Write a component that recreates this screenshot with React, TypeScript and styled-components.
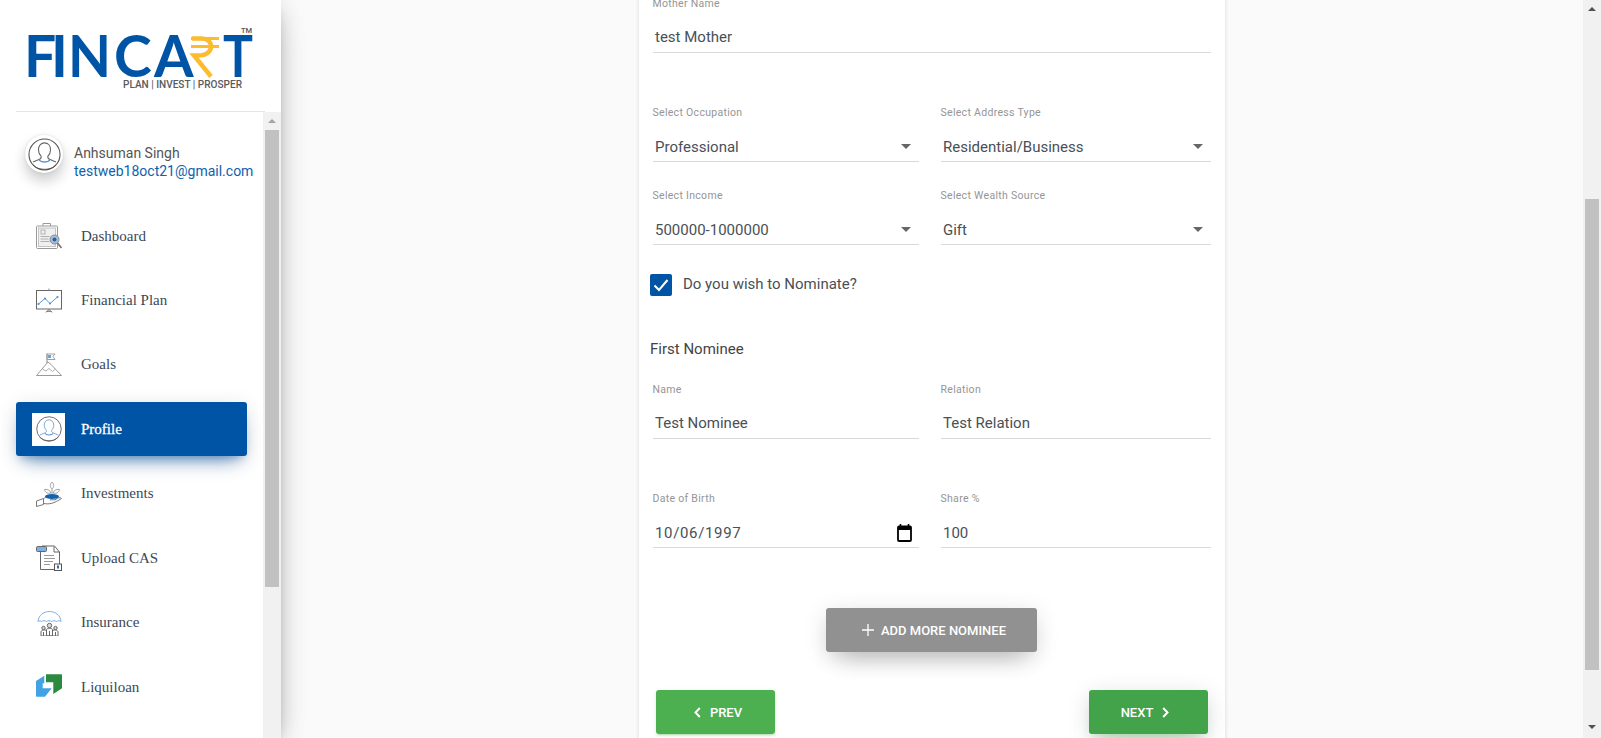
import { FC, ReactNode } from "react";
import styled, { createGlobalStyle } from "styled-components";

const GlobalStyle = createGlobalStyle`
  html, body {
    margin: 0;
    height: 738px;
    overflow: hidden;
    background: #fafafa;
    font-family: Roboto, "Liberation Sans", sans-serif;
  }
  * { box-sizing: border-box; }
`;

const Page = styled.div`
  display: flex;
  height: 738px;
  width: 1601px;
  overflow: hidden;
`;

/* sidebar */
const Sidebar = styled.aside`
  position: relative;
  z-index: 2;
  flex: none;
  width: 281px;
  height: 738px;
  display: flex;
  flex-direction: column;
  background: #fff;
  box-shadow:
    0 10px 30px -12px rgba(0, 0, 0, 0.42),
    0 4px 25px 0 rgba(0, 0, 0, 0.12),
    0 8px 10px -5px rgba(0, 0, 0, 0.2);
`;

const LogoBlock = styled.div`
  flex: none;
  height: 112px;
  margin: 0 16px;
  border-bottom: 1px solid #e4e4e4;
  padding: 0 0 0 12px;
`;

const SidebarBody = styled.div`
  flex: 1;
  display: flex;
  min-height: 0;
`;

const SidebarContent = styled.div`
  flex: 1;
  min-width: 0;
  overflow: hidden;
`;

const UserBlock = styled.div`
  height: 97px;
  padding: 23px 0 0 25px;
  display: flex;
  gap: 11px;
`;

const Avatar = styled.div`
  flex: none;
  width: 38px;
  height: 38px;
  border-radius: 50%;
  background: #fff;
  box-shadow: 0 8px 14px rgba(0, 0, 0, 0.2), 0 0 3px rgba(0, 0, 0, 0.12);
  display: flex;
  align-items: center;
  justify-content: center;
`;

const UserText = styled.div`
  padding-top: 9px;
  font-size: 14px;
  line-height: 18px;
  white-space: nowrap;
`;

const UserName = styled.div`
  color: #555;
`;

const UserEmail = styled.div`
  color: #0f62ac;
`;

const NavList = styled.nav`
  display: flex;
  flex-direction: column;
  gap: 10.45px;
  padding-left: 16px;
`;

const NavItem = styled.a<{ $active?: boolean }>`
  width: 231px;
  height: 54px;
  display: flex;
  align-items: center;
  gap: 16px;
  padding-left: 16px;
  border-radius: 3px;
  font: 400 15px "Liberation Serif", "Times New Roman", serif;
  color: ${(p) => (p.$active ? "#fff" : "#3c4858")};
  -webkit-text-stroke: ${(p) => (p.$active ? "0.3px #fff" : "0")};
  background: ${(p) => (p.$active ? "#0054a6" : "transparent")};
  box-shadow: ${(p) =>
    p.$active
      ? "0 12px 20px -10px rgba(0, 84, 166, 0.6), 0 4px 20px 0 rgba(0, 0, 0, 0.12), 0 7px 8px -5px rgba(0, 84, 166, 0.3)"
      : "none"};
`;

const NavIconBox = styled.span<{ $active?: boolean }>`
  flex: none;
  width: 33px;
  height: 33px;
  display: flex;
  align-items: center;
  justify-content: center;
  background: ${(p) => (p.$active ? "#fff" : "transparent")};
`;

/* scrollbars */
const ScrollTrack = styled.div`
  flex: none;
  width: 18px;
  height: 100%;
  display: flex;
  flex-direction: column;
  background: #f1f1f1;
`;

const ScrollArrow = styled.div<{ $down?: boolean; $dim?: boolean }>`
  flex: none;
  height: 18px;
  display: flex;
  align-items: center;
  justify-content: center;
  margin-top: ${(p) => (p.$down ? "auto" : "0")};
  margin-bottom: ${(p) => (p.$down ? "2px" : "0")};

  &::after {
    content: "";
    border-left: 4.5px solid transparent;
    border-right: 4.5px solid transparent;
    ${(p) => (p.$down ? "border-top" : "border-bottom")}: 4px solid
      ${(p) => (p.$dim ? "#a3a3a3" : "#505050")};
  }
`;

const ScrollThumb = styled.div<{ $top: number; $height: number }>`
  flex: none;
  width: 14px;
  margin: ${(p) => p.$top}px 2px 0;
  height: ${(p) => p.$height}px;
  background: #c1c1c1;
`;

/* main */
const Main = styled.main`
  flex: 1;
  min-width: 0;
  display: flex;
  justify-content: center;
  overflow: hidden;
`;

const Card = styled.section`
  flex: none;
  width: 586px;
  height: 760px;
  margin-top: -3px;
  padding: 0 14px;
  background: #fff;
  box-shadow: 0 1px 4px 0 rgba(0, 0, 0, 0.14);
`;

const Row = styled.div<{ $mt?: number }>`
  display: grid;
  grid-template-columns: 265.5px 270px;
  column-gap: 22.5px;
  margin-top: ${(p) => p.$mt ?? 0}px;
`;

const FullField = styled.div`
  grid-column: 1 / 3;
`;

const FieldLabel = styled.div`
  height: 14px;
  margin-left: -0.5px;
  font-size: 10.5px;
  line-height: 14px;
  color: #959595;
  letter-spacing: 0.3px;
  white-space: nowrap;
`;

const FieldControl = styled.div<{ $raised?: boolean }>`
  margin-top: 14px;
  height: 28px;
  padding: 0 8px ${(p) => (p.$raised ? 4 : 2)}px 2px;
  display: flex;
  align-items: center;
  justify-content: space-between;
  border-bottom: 1px solid #d8d8d8;
  font-size: 15px;
  color: #495057;
`;

const DateText = styled.span`
  letter-spacing: 0.65px;
`;

const Caret = styled.span`
  flex: none;
  margin-top: -1px;
  border-left: 5px solid transparent;
  border-right: 5px solid transparent;
  border-top: 5px solid #666;
`;

const CheckRow = styled.label`
  display: flex;
  align-items: center;
  gap: 11px;
  margin: 29px 0 0 -3px;
  height: 22px;
  font-size: 15px;
  color: #495057;
`;

const CheckText = styled.span`
  margin-top: -3px;
`;

const CheckBox = styled.span`
  flex: none;
  width: 22px;
  height: 22px;
  border-radius: 2px;
  background: #0054a6;
  display: flex;
  align-items: center;
  justify-content: center;
`;

const SectionTitle = styled.div`
  margin: 43px 0 0 -3px;
  height: 20px;
  font-size: 15px;
  line-height: 20px;
  color: #444;
`;

const Centered = styled.div`
  display: flex;
  justify-content: center;
  margin-top: 60px;
  padding-right: 1px;
`;

const Button = styled.button<{
  $tone: "gray" | "green" | "greenHover";
  $wide?: boolean;
  $padLeft?: number;
  $padRight?: number;
}>`
  width: ${(p) => (p.$wide ? 211 : 119)}px;
  height: 44px;
  border: 0;
  border-radius: 3px;
  padding: 0 ${(p) => p.$padRight ?? 0}px 0 ${(p) => p.$padLeft ?? 0}px;
  display: flex;
  align-items: center;
  justify-content: center;
  gap: ${(p) => (p.$wide ? 7 : 9)}px;
  font: 500 13px Roboto, sans-serif;
  text-transform: uppercase;
  color: #fff;
  background: ${(p) =>
    p.$tone === "gray" ? "#919191" : p.$tone === "green" ? "#4caf50" : "#43a34a"};
  box-shadow: ${(p) =>
    p.$tone === "gray"
      ? "0 14px 26px -12px rgba(0, 0, 0, 0.3), 0 4px 23px 0 rgba(0, 0, 0, 0.12)"
      : p.$tone === "greenHover"
        ? "0 14px 26px -12px rgba(76, 175, 80, 0.42), 0 4px 23px 0 rgba(0, 0, 0, 0.12), 0 8px 10px -5px rgba(76, 175, 80, 0.2)"
        : "0 2px 2px 0 rgba(76, 175, 80, 0.14), 0 3px 1px -2px rgba(76, 175, 80, 0.2), 0 1px 5px 0 rgba(76, 175, 80, 0.12)"};
`;

const PagerRow = styled.div`
  display: flex;
  justify-content: space-between;
  margin: 38px 3px 0 3px;
`;

/* drawings */
const Logo: FC = () => (
  <svg width="236" height="80" viewBox="28 22 236 80" style={{ display: "block", marginTop: 22 }}>
    <g fill="#0054a6" fontFamily="Lato, sans-serif" fontSize="57" fontWeight="700">
      <text x="24" y="77">F</text>
      <text x="51" y="77">I</text>
      <text x="68" y="77" textLength="43" lengthAdjust="spacingAndGlyphs">N</text>
      <text x="114" y="77">C</text>
      <text x="154" y="77">A</text>
      <text x="223" y="77" textLength="30" lengthAdjust="spacingAndGlyphs">T</text>
    </g>
    <g stroke="#fdbb30" fill="none">
      <path d="M191 38.500h28M191 46.500h28" strokeWidth="3" />
      <path d="M192 38.500h9c7 0 10 3.500 10 8s-4 9-13 9h-4l17 21" strokeWidth="4.500" />
    </g>
    <text x="241" y="33" fontFamily="Roboto, sans-serif" fontSize="7.500" fontWeight="500" fill="#555">TM</text>
    <text x="123" y="88" fontFamily="Roboto, sans-serif" fontSize="10.500" fontWeight="500" fill="#5a5a5a" textLength="119" lengthAdjust="spacingAndGlyphs">PLAN | INVEST | PROSPER</text>
  </svg>
);

const UserIcon: FC<{ size: number; head: string; ring: string }> = ({ size, head, ring }) => (
  <svg width={size} height={size} viewBox="0 0 34 34" fill="none">
    <circle cx="17" cy="17" r="16" stroke={ring} strokeWidth="1.100" />
    <path d="M17 5c3.800 0 6.200 3 6.200 7 0 2.800-1.200 5.200-2.700 6.600-.4 1.800.3 2.900 2.300 3.600l6 2.600M17 5c-3.800 0-6.200 3-6.200 7 0 2.800 1.200 5.200 2.700 6.600.4 1.800-.3 2.900-2.300 3.600l-6 2.600" stroke={head} strokeWidth="1.100" />
    <path d="M11.500 22.500c2 3 9 3 11 0" stroke="#5b94d6" strokeWidth="1.400" />
    <path d="M5 27.500c3 3.500 7 4.800 12 4.800s9-1.300 12-4.800" stroke={ring} strokeWidth="1" />
  </svg>
);

const DashboardIcon: FC = () => (
  <svg width="26" height="26" viewBox="0 0 26 26" fill="none">
    <rect x="0.500" y="3" width="21" height="22.500" rx="1" stroke="#999" />
    <rect x="2.500" y="5" width="17" height="18.500" fill="#efefef" stroke="#c4c4c4" />
    <path d="M7 3V0.500h7.500V3" stroke="#999" />
    <rect x="5" y="7" width="4" height="4" stroke="#b5b5b5" />
    <path d="M4.500 13.500h9M4.500 16h8M4.500 18.500h9" stroke="#b0b0b0" />
    <circle cx="18.500" cy="16.500" r="4.500" fill="#a9bcd4" stroke="#8a8a8a" />
    <circle cx="18.500" cy="16.500" r="2" fill="#1a66b3" />
    <path d="M21.500 20l4 5" stroke="#777" strokeWidth="1.800" />
  </svg>
);

const PlanIcon: FC = () => (
  <svg width="26" height="26" viewBox="0 0 26 26" fill="none">
    <rect x="0.500" y="3.500" width="25" height="18.500" stroke="#666" />
    <path d="M13 3.500V1.500M13 22v2M13 22l-3 3.500M13 22l3 3.500M10 24.500h6" stroke="#888" />
    <path d="M2.500 17L9 11.500l5 5L21.500 10" stroke="#5a97de" strokeWidth="1" />
    <g fill="#4d8fd8">
      <circle cx="2.500" cy="17" r="1.100" />
      <circle cx="9" cy="11.500" r="1.100" />
      <circle cx="14" cy="16.500" r="1.100" />
      <circle cx="21.500" cy="10" r="1.100" />
    </g>
  </svg>
);

const GoalsIcon: FC = () => (
  <svg width="26" height="26" viewBox="0 0 26 26" fill="none">
    <path d="M0.500 23.500L12 10l3 2.500L25.500 23.500z" stroke="#999" />
    <path d="M6.500 17l3.500 2 3-2.500 3.500 3 3-2.500" stroke="#b0b0b0" />
    <path d="M11 11V1.500" stroke="#8a8a8a" />
    <path d="M11 2h8l-2 2.500 2 3h-8z" stroke="#a0a0a0" />
    <rect x="12" y="3" width="3" height="3" fill="#6ba3e0" />
  </svg>
);

const InvestIcon: FC = () => (
  <svg width="26" height="26" viewBox="0 0 26 26" fill="none">
    <path d="M0.500 20l7-2.500v6l-7 2zM7.500 18c3-3 5.500-2.500 8-1.500h4c1 .5 1 2-.5 2.300H14M8 22.500c5 1 10 0 17.500-5-1.500-1.500-3-1-6.500 1.300" stroke="#777" />
    <ellipse cx="16" cy="15.500" rx="7" ry="2.500" fill="#0f62ac" />
    <path d="M16 13V8M16 8c-2.200-1.800-2.200-5 0-7 2.200 2 2.200 5.200 0 7zM15 12c-.5-2.500-3.500-4-6.500-3.500.5 3 3.500 4.500 6.500 3.500zM17 12c.5-2.500 3.500-4 6.500-3.500-.5 3-3.500 4.500-6.500 3.500z" stroke="#a0a0a0" />
  </svg>
);

const UploadIcon: FC = () => (
  <svg width="26" height="26" viewBox="0 0 26 26" fill="none">
    <path d="M4.500 3V24.500h14M23.500 19V7l-5-6H6" stroke="#666" />
    <path d="M18 1.500V7h5.500" stroke="#666" />
    <rect x="0.500" y="1.500" width="10" height="5" rx="1" fill="#7cb0e8" stroke="#666" />
    <path d="M8 10.500h10M8 13.500h11M8 16.500h9M8 19.500h6" stroke="#999" />
    <rect x="18.500" y="19" width="7" height="6.500" fill="#fff" stroke="#555" />
    <path d="M22 20.500v3" stroke="#0f62ac" strokeWidth="1.800" />
  </svg>
);

const InsuranceIcon: FC = () => (
  <svg width="26" height="26" viewBox="0 0 26 26" fill="none">
    <path d="M2 11.500C2.500 5 8 1.500 13.500 1.500S24.500 5 25 11.500c-1.500-1-3-1-4.500 0-1.500-1-3.500-1-5 0-1.500-1-3.500-1-5 0-1.500-1-3.500-1-5 0-1-1-2-1-3.500 0z" stroke="#7caee6" />
    <circle cx="13.500" cy="15.500" r="2.200" fill="#ddd" stroke="#666" />
    <circle cx="7.500" cy="18" r="1.700" fill="#ddd" stroke="#666" />
    <circle cx="19.500" cy="18" r="1.700" fill="#ddd" stroke="#666" />
    <path d="M10.500 26v-6.500c0-1.500 6-1.500 6 0V26zM5 26v-4c0-2.500 5-2.500 5.500-1M22 26v-4c0-2.500-5-2.500-5.500-1M5 26h17M7.500 22v4M19.500 22v4M13.500 21v5" stroke="#666" />
  </svg>
);

const LiquiloanIcon: FC = () => (
  <svg width="26" height="26" viewBox="0 0 26 26" fill="none">
    <path d="M0 7L8.300 1.700V9.300H6.700V14.300H15.700L9 22.700H1C.3 22.700 0 22.300 0 21.700z" fill="#42a3e4" />
    <path d="M10 .3H25C25.700 .3 26 .7 26 1.300V14.300L17.300 20V8.300H10z" fill="#2a8a3e" />
  </svg>
);

const ChevronLeft: FC = () => (
  <svg width="7" height="11" viewBox="0 0 7 11" fill="none">
    <path d="M5.800 1L1.500 5.500l4.300 4.500" stroke="#fff" strokeWidth="2" />
  </svg>
);

const ChevronRight: FC = () => (
  <svg width="7" height="11" viewBox="0 0 7 11" fill="none">
    <path d="M1.200 1l4.300 4.500L1.200 10" stroke="#fff" strokeWidth="2" />
  </svg>
);

const PlusIcon: FC = () => (
  <svg width="12" height="12" viewBox="0 0 12 12" fill="none">
    <path d="M6 0v12M0 6h12" stroke="#fff" strokeWidth="1.300" />
  </svg>
);

const CalendarIcon: FC = () => (
  <svg width="15" height="18" viewBox="0 0 15 18" fill="none" style={{ marginRight: -1 }}>
    <path d="M3.500 0v3M11.500 0v3" stroke="#000" strokeWidth="1.600" />
    <rect x="1" y="2.500" width="13" height="14.500" rx="1" stroke="#000" strokeWidth="1.800" />
    <path d="M1 4.500h13" stroke="#000" strokeWidth="3" />
  </svg>
);

const navItems: { label: string; icon: ReactNode; active?: boolean }[] = [
  { label: "Dashboard", icon: <DashboardIcon /> },
  { label: "Financial Plan", icon: <PlanIcon /> },
  { label: "Goals", icon: <GoalsIcon /> },
  { label: "Profile", icon: <UserIcon size={26} head="#6c9bd2" ring="#555" />, active: true },
  { label: "Investments", icon: <InvestIcon /> },
  { label: "Upload CAS", icon: <UploadIcon /> },
  { label: "Insurance", icon: <InsuranceIcon /> },
  { label: "Liquiloan", icon: <LiquiloanIcon /> },
];

const Field: FC<{
  label: string;
  value: ReactNode;
  select?: boolean;
  raised?: boolean;
  trailing?: ReactNode;
}> = ({ label, value, select, raised, trailing }) => (
  <div>
    <FieldLabel>{label}</FieldLabel>
    <FieldControl $raised={raised}>
      <span>{value}</span>
      {select ? <Caret /> : trailing}
    </FieldControl>
  </div>
);

export default function App() {
  return (
    <Page>
      <GlobalStyle />
      <Sidebar>
        <LogoBlock>
          <Logo />
        </LogoBlock>
        <SidebarBody>
          <SidebarContent>
            <UserBlock>
              <Avatar>
                <UserIcon size={33} head="#666" ring="#555" />
              </Avatar>
              <UserText>
                <UserName>Anhsuman Singh</UserName>
                <UserEmail>testweb18oct21@gmail.com</UserEmail>
              </UserText>
            </UserBlock>
            <NavList>
              {navItems.map((item) => (
                <NavItem key={item.label} $active={item.active}>
                  <NavIconBox $active={item.active}>{item.icon}</NavIconBox>
                  {item.label}
                </NavItem>
              ))}
            </NavList>
          </SidebarContent>
          <ScrollTrack>
            <ScrollArrow $dim />
            <ScrollThumb $top={0} $height={457} />
          </ScrollTrack>
        </SidebarBody>
      </Sidebar>

      <Main>
        <Card>
          <Row>
            <FullField>
              <Field label="Mother Name" value="test Mother" raised />
            </FullField>
          </Row>
          <Row $mt={53}>
            <Field label="Select Occupation" value="Professional" select />
            <Field label="Select Address Type" value="Residential/Business" select />
          </Row>
          <Row $mt={27}>
            <Field label="Select Income" value="500000-1000000" select />
            <Field label="Select Wealth Source" value="Gift" select />
          </Row>
          <CheckRow>
            <CheckBox>
              <svg width="16" height="14" viewBox="0 0 16 14" fill="none">
                <path d="M1.500 7.500l4.500 4.500L14.500 2" stroke="#fff" strokeWidth="2" />
              </svg>
            </CheckBox>
            <CheckText>Do you wish to Nominate?</CheckText>
          </CheckRow>
          <SectionTitle>First Nominee</SectionTitle>
          <Row $mt={24}>
            <Field label="Name" value="Test Nominee" raised />
            <Field label="Relation" value="Test Relation" raised />
          </Row>
          <Row $mt={53}>
            <Field label="Date of Birth" value={<DateText>10/06/1997</DateText>} trailing={<CalendarIcon />} />
            <Field label="Share %" value="100" />
          </Row>
          <Centered>
            <Button $tone="gray" $wide $padLeft={5}>
              <PlusIcon />
              Add more nominee
            </Button>
          </Centered>
          <PagerRow>
            <Button $tone="green" $padLeft={5}>
              <ChevronLeft />
              Prev
            </Button>
            <Button $tone="greenHover" $padRight={7}>
              Next
              <ChevronRight />
            </Button>
          </PagerRow>
        </Card>
      </Main>

      <ScrollTrack>
        <ScrollArrow />
        <ScrollThumb $top={181} $height={471} />
        <ScrollArrow $down />
      </ScrollTrack>
    </Page>
  );
}
